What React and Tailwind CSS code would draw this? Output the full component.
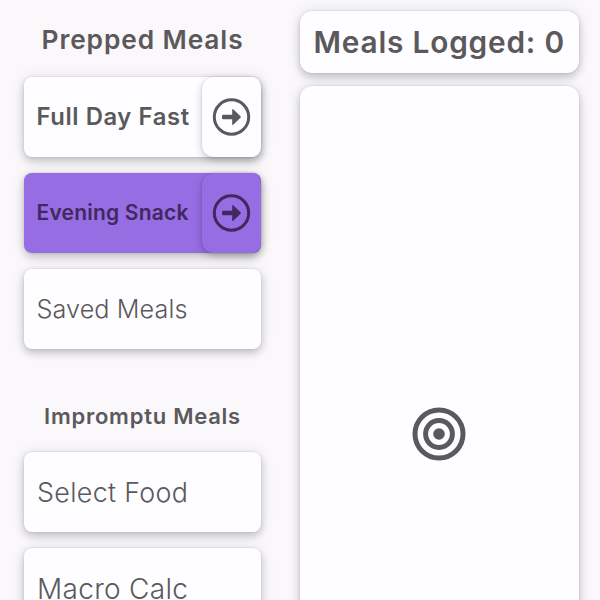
const cardShadow = "shadow-[0_4px_8px_rgba(0,0,0,0.2),0_0_16px_rgba(0,0,0,0.08),0_0_2px_rgba(0,0,0,0.14)]";

function ArrowIcon() {
  return (
    <svg width="40" height="40" viewBox="0 0 40 40" fill="none">
      <circle cx="19.5" cy="20" r="17.2" stroke="currentColor" strokeWidth="3" />
      <path
        d="M11.3 17.7h8.9V12.7q0-1.2 1-.4l7.3 7q.7.7 0 1.4l-7.3 7q-1 .8-1-.4V22.3h-8.9q-1.3 0-1.3-1.3v-2.1q0-1.2 1.3-1.2z"
        fill="currentColor"
      />
    </svg>
  );
}

function TargetIcon() {
  return (
    <svg width="54" height="54" viewBox="0 0 54 54" fill="none" stroke="#5b595b" strokeWidth="5">
      <circle cx="27" cy="27" r="24" />
      <circle cx="27" cy="27" r="13.4" />
      <circle cx="27" cy="27" r="5.8" fill="#5b595b" stroke="none" />
    </svg>
  );
}

function MealCard({ label, textClass, arrow, active }) {
  return (
    <div
      className={`flex h-[80px] w-[237px] shrink-0 items-center justify-between rounded-lg ${cardShadow} ${
        active ? "bg-[#966de3] text-[#41285e]" : "bg-[#fefdff] text-[#5b595b]"
      }`}
    >
      <span className={`whitespace-nowrap ${textClass}`}>{label}</span>
      {arrow && (
        <div
          className={`flex h-full w-[59px] shrink-0 items-center justify-center rounded-l-xl rounded-r-[10px] shadow-[0_3px_9px_rgba(0,0,0,0.22),0_0_2px_rgba(0,0,0,0.14)] ${
            active ? "bg-[#966de3]" : "bg-[#fefdff]"
          }`}
        >
          <ArrowIcon />
        </div>
      )}
    </div>
  );
}

export default function App() {
  return (
    <div className="flex h-[600px] w-[600px] overflow-hidden bg-[#faf8fb] font-['Inter',sans-serif] text-[#5b595b]">
      <section className="flex w-[285px] shrink-0 flex-col items-start pl-[24px]">
        <h2 className="flex h-[77px] w-[237px] shrink-0 items-center justify-center whitespace-nowrap pt-[3px] text-[26.3px] font-semibold tracking-[0.9px]">
          Prepped Meals
        </h2>
        <div className="flex shrink-0 flex-col gap-4">
          <MealCard label="Full Day Fast" textClass="pl-[12.5px] text-[23.8px] font-semibold tracking-[0.6px]" arrow />
          <MealCard label="Evening Snack" textClass="pl-[12.5px] text-[21px] font-semibold tracking-[0.2px]" arrow active />
          <MealCard label="Saved Meals" textClass="pl-[12.5px] pt-[2px] text-[25.2px] font-[360] tracking-[0.1px]" />
        </div>
        <h2 className="flex h-[102px] w-[237px] shrink-0 items-center justify-center whitespace-nowrap pt-[33px] text-[22px] font-semibold tracking-[0.75px]">
          Impromptu Meals
        </h2>
        <div className="flex shrink-0 flex-col gap-4 pt-[0.5px]">
          <MealCard label="Select Food" textClass="pl-[13px] pt-[1px] text-[26.8px] font-[360] tracking-[0.35px]" />
          <MealCard label="Macro Calc" textClass="pl-[13px] pt-[2px] text-[28px] font-[360] tracking-[0.3px]" />
        </div>
      </section>
      <section className="flex flex-col gap-[13px] pl-[14.5px] pt-[11px]">
        <h1
          className={`flex h-[62px] w-[279.5px] shrink-0 items-center justify-center whitespace-nowrap rounded-xl bg-[#fefdff] text-[29.8px] font-semibold tracking-[0.8px] ${cardShadow}`}
        >
          Meals Logged: 0
        </h1>
        <div
          className={`flex h-[696px] w-[279.5px] shrink-0 items-center justify-center rounded-xl bg-[#fefdff] ${cardShadow}`}
        >
          <TargetIcon />
        </div>
      </section>
    </div>
  );
}
